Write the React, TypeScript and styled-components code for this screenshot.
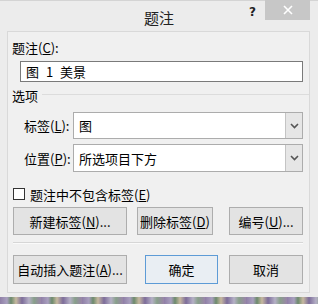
import React from "react";
import styled, { createGlobalStyle } from "styled-components";

const Global = createGlobalStyle`
  html, body { margin: 0; padding: 0; }
  body {
    width: 318px;
    height: 304px;
    overflow: hidden;
    font-family: "Noto Sans CJK SC", "Liberation Sans", sans-serif;
    font-size: 13px;
    color: #000;
  }
`;

const Window = styled.div`
  width: 318px;
  height: 304px;
  display: flex;
  flex-direction: column;
  background: #ececec;
  border-top: 1px solid #d4d4d4;
  box-sizing: border-box;
`;

const TitleBar = styled.div`
  height: 30px;
  display: grid;
  grid-template-columns: 1fr auto 1fr;
  align-items: start;
`;

const Title = styled.div`
  grid-column: 2;
  font-size: 15px;
  line-height: 15px;
  margin-top: 9px;
  color: #222;
`;

const TitleButtons = styled.div`
  grid-column: 3;
  justify-self: end;
  display: flex;
  align-items: flex-start;
  margin-right: 8px;
`;

const HelpMark = styled.span`
  font-family: "DejaVu Sans", sans-serif;
  font-weight: bold;
  font-size: 12px;
  line-height: 12px;
  margin-top: 5px;
  margin-right: 9px;
  color: #222;
`;

const CloseButton = styled.div`
  width: 45px;
  height: 20px;
  margin-top: -1px;
  background: #c7c7c7;
  display: flex;
  align-items: center;
  justify-content: center;
`;

const Panel = styled.div`
  margin: 0 8px 0 7px;
  height: 262px;
  box-sizing: border-box;
  background: #f0f0f0;
  border: 1px solid #d9d9d9;
  display: flex;
  flex-direction: column;
  padding-left: 4px;
`;

const Label = styled.div<{ $indent?: number; $top?: number }>`
  height: 16px;
  line-height: 16px;
  margin-left: ${(p) => p.$indent ?? 0}px;
  margin-top: ${(p) => p.$top ?? 0}px;
  white-space: nowrap;
`;

const TextBox = styled.div`
  margin: 5px 0 0 8px;
  width: 283px;
  height: 21px;
  box-sizing: border-box;
  background: #fff;
  border: 1px solid #7a7a7a;
  padding-left: 5px;
  line-height: 19px;
  word-spacing: 4px;
  white-space: pre;
`;

const GroupHeader = styled.div`
  margin-top: 5px;
  height: 16px;
  display: flex;
  align-items: center;
  gap: 4px;
`;

const GroupLine = styled.div`
  flex: 1;
  height: 1px;
  background: #dcdcdc;
  margin-top: -1px;
`;

const FieldRow = styled.div<{ $top: number; $height: number }>`
  margin-top: ${(p) => p.$top}px;
  height: ${(p) => p.$height}px;
  display: flex;
  align-items: center;
`;

const FieldLabel = styled.div`
  width: 49px;
  margin-left: 12px;
  white-space: nowrap;
`;

const Select = styled.div`
  width: 230px;
  height: 100%;
  box-sizing: border-box;
  background: #fff;
  border: 1px solid #acacac;
  display: flex;
  align-items: stretch;
`;

const SelectValue = styled.div`
  flex: 1;
  padding-left: 5px;
  display: flex;
  align-items: center;
`;

const DropButton = styled.div`
  width: 16px;
  background: #e6e6e6;
  border-left: 1px solid #c4c4c4;
  display: flex;
  align-items: center;
  justify-content: center;
`;

const CheckRow = styled.div`
  margin-top: 14px;
  height: 16px;
  display: flex;
  align-items: center;
  gap: 5px;
  margin-left: 1px;
`;

const CheckBox = styled.div`
  width: 12px;
  height: 12px;
  box-sizing: border-box;
  background: #fff;
  border: 1px solid #333;
`;

const ButtonRow = styled.div<{ $top: number; $height: number }>`
  margin-top: ${(p) => p.$top}px;
  height: ${(p) => p.$height}px;
  display: flex;
  padding-left: 1px;
`;

const Button = styled.div<{ $width: number; $gap?: number; $focused?: boolean }>`
  width: ${(p) => p.$width}px;
  margin-left: ${(p) => p.$gap ?? 0}px;
  height: 100%;
  box-sizing: border-box;
  background: ${(p) => (p.$focused ? "#e9eef3" : "#e3e3e3")};
  border: 1px solid ${(p) => (p.$focused ? "#5d9bd6" : "#adadad")};
  display: flex;
  align-items: center;
  justify-content: center;
  white-space: nowrap;
`;

const Separator = styled.div`
  margin: 7px 0 0 1px;
  width: 290px;
  height: 1px;
  background: #d6d6d6;
  border-bottom: 1px solid #fafafa;
`;

const FrameBottom = styled.div`
  height: 4px;
`;

const Desktop = styled.div`
  flex: 1;
  background: repeating-linear-gradient(
    90deg,
    #8f7fa6 0px,
    #a9a0bf 7px,
    #6c8a6c 11px,
    #c7b9a0 16px,
    #7d6d9a 22px,
    #b5b0c6 29px,
    #88a08a 34px,
    #9a85a9 41px
  );
`;

const Chevron = () => (
  <svg width="9" height="6" viewBox="0 0 9 6">
    <path d="M1 1 L4.5 4.5 L8 1" fill="none" stroke="#555" strokeWidth="1.6" />
  </svg>
);

const u = (c: string) => <u>{c}</u>;

export default function App() {
  return (
    <>
      <Global />
      <Window>
        <TitleBar>
          <Title>题注</Title>
          <TitleButtons>
            <HelpMark>?</HelpMark>
            <CloseButton>
              <svg width="10" height="10" viewBox="0 0 10 10">
                <path d="M1 1 L9 9 M9 1 L1 9" stroke="#fff" strokeWidth="1.6" />
              </svg>
            </CloseButton>
          </TitleButtons>
        </TitleBar>
        <Panel>
          <Label $top={8}>题注({u("C")}):</Label>
          <TextBox>图 1 美景</TextBox>
          <GroupHeader>
            <span>选项</span>
            <GroupLine />
          </GroupHeader>
          <FieldRow $top={9} $height={27}>
            <FieldLabel>标签({u("L")}):</FieldLabel>
            <Select>
              <SelectValue>图</SelectValue>
              <DropButton>
                <Chevron />
              </DropButton>
            </Select>
          </FieldRow>
          <FieldRow $top={5} $height={28}>
            <FieldLabel>位置({u("P")}):</FieldLabel>
            <Select>
              <SelectValue>所选项目下方</SelectValue>
              <DropButton>
                <Chevron />
              </DropButton>
            </Select>
          </FieldRow>
          <CheckRow>
            <CheckBox />
            <span>题注中不包含标签({u("E")})</span>
          </CheckRow>
          <ButtonRow $top={5} $height={28}>
            <Button $width={114}>新建标签({u("N")})...</Button>
            <Button $width={76} $gap={10}>删除标签({u("D")})</Button>
            <Button $width={74} $gap={16}>编号({u("U")})...</Button>
          </ButtonRow>
          <Separator />
          <ButtonRow $top={11} $height={29}>
            <Button $width={114}>自动插入题注({u("A")})...</Button>
            <Button $width={73} $gap={18} $focused>
              确定
            </Button>
            <Button $width={74} $gap={11}>取消</Button>
          </ButtonRow>
        </Panel>
        <FrameBottom />
        <Desktop />
      </Window>
    </>
  );
}
